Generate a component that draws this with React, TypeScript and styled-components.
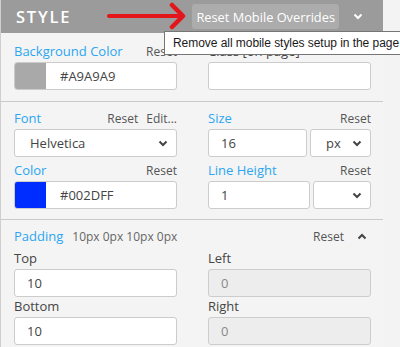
import styled, { createGlobalStyle } from 'styled-components';

const GlobalStyle = createGlobalStyle`
  html, body {
    margin: 0;
    padding: 0;
    background: #f3f3f3;
    font-family: "Open Sans", "Liberation Sans", sans-serif;
  }
`;

const Panel = styled.div`
  position: relative;
  width: 383px;
  background: #f4f4f4;
  border-left: 1px solid #cfcfcf;
  box-sizing: border-box;
`;

const Header = styled.div`
  height: 33px;
  background: #9b9b9b;
  display: flex;
  align-items: center;
  padding: 0 14px 0 15px;
  box-sizing: border-box;
`;

const Title = styled.div`
  color: #fff;
  font-size: 16.5px;
  font-weight: 600;
  letter-spacing: 1.8px;
  flex: 1;
`;

const Arrow = styled.svg`
  position: absolute;
  left: 105px;
  top: 2px;
`;

const OverrideButton = styled.button`
  background: #acacac;
  color: #fff;
  border: 0;
  border-radius: 3px;
  height: 25px;
  padding: 0 4px;
  font-family: inherit;
  font-size: 12.8px;
  margin-right: 8px;
`;

const HeaderToggle = styled.div`
  width: 22px;
  display: flex;
  justify-content: center;
`;

const Tooltip = styled.div`
  position: absolute;
  left: 163px;
  top: 31px;
  width: 260px;
  height: 24px;
  box-sizing: border-box;
  background: #fff;
  border: 1px solid #767676;
  font-family: "Liberation Sans", Arial, sans-serif;
  font-size: 12px;
  letter-spacing: -0.05px;
  color: #1a1a1a;
  padding: 0 8px;
  line-height: 22px;
  white-space: nowrap;
  z-index: 2;
`;

const Section = styled.div<{ $top?: number; $bottom?: number; $last?: boolean }>`
  padding: ${p => p.$top ?? 8}px 13px ${p => p.$bottom ?? 10}px;
  border-bottom: ${p => (p.$last ? '0' : '1px solid #c9c9c9')};
`;

const Grid = styled.div<{ $rowGap?: number }>`
  display: grid;
  grid-template-columns: 163px 163px;
  column-gap: 31px;
  row-gap: ${p => p.$rowGap ?? 5}px;
`;

const Field = styled.div`
  display: flex;
  flex-direction: column;
  gap: 3px;
`;

const LabelRow = styled.div<{ $space?: number }>`
  display: flex;
  align-items: center;
  height: 16px;
  gap: 8px;
  margin-bottom: ${p => p.$space ?? 0}px;
`;

const Label = styled.span<{ $plain?: boolean; $fixed?: boolean }>`
  color: ${p => (p.$plain ? '#454545' : '#2ba6f1')};
  font-size: 13px;
  flex: ${p => (p.$fixed ? '0 0 auto' : '1')};
`;

const Action = styled.span`
  color: #555;
  font-size: 12px;
`;

const Summary = styled.span`
  color: #666;
  font-size: 12px;
  margin-left: 1px;
  flex: 1;
`;

const InputBox = styled.div<{ $disabled?: boolean }>`
  height: 28px;
  box-sizing: border-box;
  border: 1px solid #cccccc;
  border-radius: 3px;
  background: ${p => (p.$disabled ? '#ededed' : '#fff')};
  color: ${p => (p.$disabled ? '#888' : '#444')};
  font-size: 13px;
  display: flex;
  align-items: center;
  padding: 0 0 0 12px;
  overflow: hidden;
  flex: 1 1 auto;
`;

const SelectBox = styled(InputBox)<{ $indent?: number; $width?: number }>`
  padding: 0 8px 0 ${p => p.$indent ?? 15}px;
  justify-content: ${p => (p.$indent === 0 ? 'flex-end' : 'space-between')};
  ${p => (p.$width ? `flex: 0 0 ${p.$width}px;` : '')}
`;

const ColorBox = styled(InputBox)`
  padding: 0;
`;

const Swatch = styled.div<{ $color: string }>`
  width: 31px;
  align-self: stretch;
  background: ${p => p.$color};
`;

const ColorText = styled.span`
  margin-left: 14px;
`;

const InputPair = styled.div`
  display: flex;
  gap: 3px;
`;

const Collapse = styled.span`
  display: flex;
  margin: 0 3px 0 5px;
`;

const Chevron = ({ up = false, color = '#444' }: { up?: boolean; color?: string }) => (
  <svg width="10" height="7" viewBox="0 0 10 7">
    <path
      d={up ? 'M1.5 5.5 L5 2 L8.5 5.5' : 'M1.5 1.5 L5 5 L8.5 1.5'}
      fill="none"
      stroke={color}
      strokeWidth="2"
    />
  </svg>
);

const ColorInput = ({ color, value }: { color: string; value: string }) => (
  <ColorBox>
    <Swatch $color={color} />
    <ColorText>{value}</ColorText>
  </ColorBox>
);

export default function App() {
  return (
    <>
      <GlobalStyle />
      <Panel>
        <Header>
          <Title>STYLE</Title>
          <OverrideButton>Reset Mobile Overrides</OverrideButton>
          <HeaderToggle>
            <Chevron color="#fff" />
          </HeaderToggle>
        </Header>
        <Arrow width="82" height="28" viewBox="0 0 82 28">
          <path d="M3 14 H76" stroke="#e3161c" strokeWidth="4" strokeLinecap="round" />
          <path d="M66 3 L77 14 L66 25" fill="none" stroke="#e3161c" strokeWidth="4.5" strokeLinecap="round" strokeLinejoin="round" />
        </Arrow>
        <Tooltip>Remove all mobile styles setup in the page</Tooltip>

        <Section $top={10} $bottom={11}>
          <Grid>
            <Field>
              <LabelRow>
                <Label>Background Color</Label>
                <Action>Reset</Action>
              </LabelRow>
              <ColorInput color="#a9a9a9" value="#A9A9A9" />
            </Field>
            <Field>
              <LabelRow>
                <Label $plain>Class [on page]</Label>
              </LabelRow>
              <InputBox />
            </Field>
          </Grid>
        </Section>

        <Section>
          <Grid>
            <Field>
              <LabelRow>
                <Label>Font</Label>
                <Action>Reset</Action>
                <Action>Edit...</Action>
              </LabelRow>
              <SelectBox>
                <span>Helvetica</span>
                <Chevron />
              </SelectBox>
            </Field>
            <Field>
              <LabelRow>
                <Label>Size</Label>
                <Action>Reset</Action>
              </LabelRow>
              <InputPair>
                <InputBox>16</InputBox>
                <SelectBox $indent={15} $width={61}>
                  <span>px</span>
                  <Chevron />
                </SelectBox>
              </InputPair>
            </Field>
            <Field>
              <LabelRow>
                <Label>Color</Label>
                <Action>Reset</Action>
              </LabelRow>
              <ColorInput color="#002dff" value="#002DFF" />
            </Field>
            <Field>
              <LabelRow>
                <Label>Line Height</Label>
                <Action>Reset</Action>
              </LabelRow>
              <InputPair>
                <InputBox>1</InputBox>
                <SelectBox $indent={0} $width={58}>
                  <Chevron />
                </SelectBox>
              </InputPair>
            </Field>
          </Grid>
        </Section>

        <Section $bottom={4} $last>
          <LabelRow $space={6}>
            <Label $fixed>Padding</Label>
            <Summary>10px 0px 10px 0px</Summary>
            <Action>Reset</Action>
            <Collapse>
              <Chevron up />
            </Collapse>
          </LabelRow>
          <Grid $rowGap={1}>
            <Field>
              <LabelRow>
                <Label $plain>Top</Label>
              </LabelRow>
              <InputBox>10</InputBox>
            </Field>
            <Field>
              <LabelRow>
                <Label $plain>Left</Label>
              </LabelRow>
              <InputBox $disabled>0</InputBox>
            </Field>
            <Field>
              <LabelRow>
                <Label $plain>Bottom</Label>
              </LabelRow>
              <InputBox>10</InputBox>
            </Field>
            <Field>
              <LabelRow>
                <Label $plain>Right</Label>
              </LabelRow>
              <InputBox $disabled>0</InputBox>
            </Field>
          </Grid>
        </Section>
      </Panel>
    </>
  );
}
